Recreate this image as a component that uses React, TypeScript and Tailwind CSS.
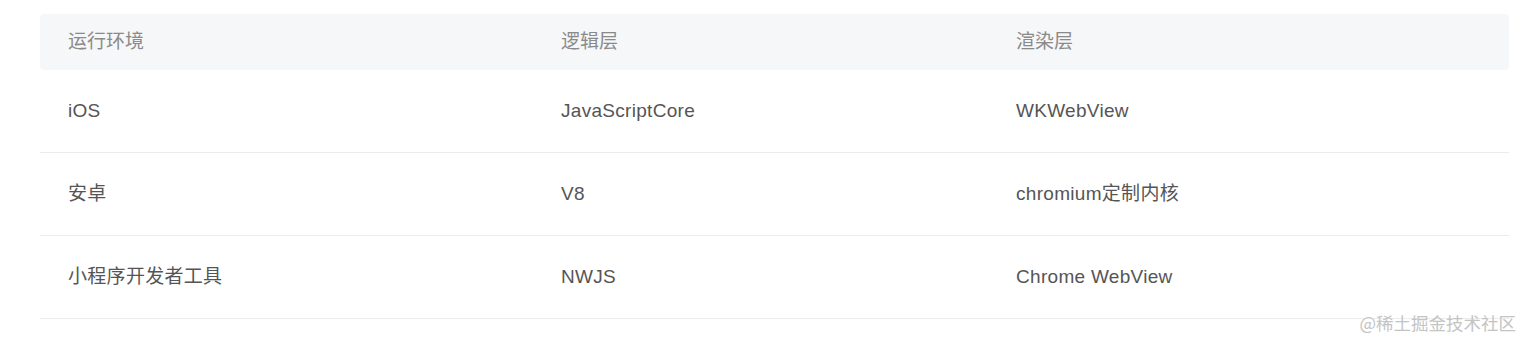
const header = ["运行环境", "逻辑层", "渲染层"];

const rows = [
  ["iOS", "JavaScriptCore", "WKWebView"],
  ["安卓", "V8", "chromium定制内核"],
  ["小程序开发者工具", "NWJS", "Chrome WebView"],
];

const cols = "grid grid-cols-[493px_455px_1fr]";

export default function App() {
  return (
    <div
      className="relative w-[1526px] h-[338px] bg-white pt-[14px] pl-[40px] pr-[17px]"
      style={{ fontFamily: '"Liberation Sans", "Noto Sans CJK SC", sans-serif' }}
    >
      <div className="text-[19px]">
        {/* header */}
        <div className={`${cols} h-[56px] items-center rounded-[4px] bg-[#f6f7f8] text-[#8a8a8a]`}>
          {header.map((h) => (
            <div key={h} className="pl-[28px]">
              {h}
            </div>
          ))}
        </div>

        {/* rows */}
        {rows.map((r) => (
          <div
            key={r[0]}
            className={`${cols} h-[83px] items-center border-b border-[#ececec] text-[#555555]`}
          >
            {r.map((c) => (
              <div key={c} className="pl-[28px] tracking-[0.3px]">
                {c}
              </div>
            ))}
          </div>
        ))}
      </div>

      {/* watermark */}
      <div
        className="absolute right-[10px] top-[314px] text-[17.5px] leading-none text-[#c4c4c4]"
        style={{ fontFamily: '"Noto Sans CJK SC", sans-serif' }}
      >
        @稀土掘金技术社区
      </div>
    </div>
  );
}
